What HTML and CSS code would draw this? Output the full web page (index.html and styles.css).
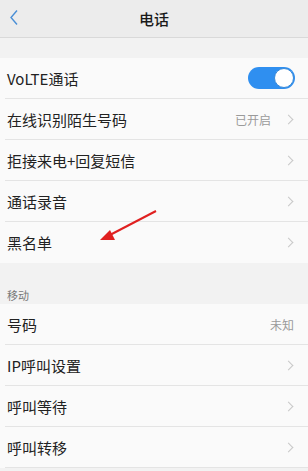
FILE: index.html
```html
<!DOCTYPE html>
<html lang="zh">
<head>
<meta charset="utf-8">
<link rel="stylesheet" href="styles.css">
</head>
<body>
<div class="page">
  <header class="topbar">
    <svg class="back" width="10" height="17" viewBox="0 0 10 17"><path d="M8 1.5 L2 8.5 L8 15.5" fill="none" stroke="#4a8fd6" stroke-width="1.4"/></svg>
    <div class="title">电话</div>
  </header>
  <div class="gap"></div>
  <ul class="list">
    <li class="row"><span class="label">VoLTE通话</span><span class="toggle"><span class="knob"></span></span></li>
    <li class="row"><span class="label">在线识别陌生号码</span><span class="value">已开启</span><span class="chev"></span></li>
    <li class="row"><span class="label">拒接来电+回复短信</span><span class="chev"></span></li>
    <li class="row"><span class="label">通话录音</span><span class="chev"></span></li>
    <li class="row last"><span class="label">黑名单</span><span class="chev"></span></li>
  </ul>
  <div class="section">移动</div>
  <ul class="list">
    <li class="row"><span class="label">号码</span><span class="value nochev">未知</span></li>
    <li class="row"><span class="label">IP呼叫设置</span><span class="chev"></span></li>
    <li class="row"><span class="label">呼叫等待</span><span class="chev"></span></li>
    <li class="row"><span class="label">呼叫转移</span><span class="chev"></span></li>
  </ul>
  <svg class="arrow" width="308" height="471" viewBox="0 0 308 471">
    <line x1="156" y1="211" x2="108" y2="236" stroke="#e02020" stroke-width="2"/>
    <polygon points="100,240 110,230 115,240" fill="#e02020"/>
  </svg>
</div>
</body>
</html>
```
FILE: styles.css
```css
* { box-sizing: border-box; }
html, body { margin: 0; padding: 0; }
body {
  font-family: "Noto Sans CJK SC", "Noto Sans", sans-serif;
  background: #f2f2f2;
  color: #222;
}
.page {
  position: relative;
  width: 308px;
  height: 471px;
  overflow: hidden;
}
.topbar {
  position: relative;
  height: 38px;
  background: #ececec;
  border-bottom: 1px solid #d9d9d9;
  display: flex;
  align-items: center;
  justify-content: center;
}
.back {
  position: absolute;
  left: 9px;
  top: 9px;
}
.title {
  font-size: 15px;
  font-weight: 500;
  color: #1a1a1a;
}
.gap {
  height: 20px;
  background: #f2f2f2;
}
.list {
  list-style: none;
  margin: 0;
  padding: 0;
  background: #fafafa;
}
.row {
  height: 41px;
  display: flex;
  align-items: center;
  padding: 0 14px 0 2px;
  border-bottom: 1px solid #e4e4e4;
  margin-left: 5px;
}
.row.last { border-bottom: none; }
.label {
  flex: 1;
  font-size: 15px;
  color: #222;
}
.value {
  font-size: 12px;
  color: #9a9a9a;
  margin-right: 14px;
}
.value.nochev { margin-right: 0; }
.chev {
  width: 7px;
  height: 7px;
  border-top: 1.3px solid #c8c8c8;
  border-right: 1.3px solid #c8c8c8;
  transform: rotate(45deg);
  margin-right: 2px;
}
.toggle {
  width: 47px;
  height: 22px;
  border-radius: 11px;
  background: #2f8ff0;
  position: relative;
  margin-right: -1px;
}
.knob {
  position: absolute;
  right: 1px;
  top: 1px;
  width: 20px;
  height: 20px;
  border-radius: 50%;
  background: #fff;
  border: 1px solid #3a8ad8;
}
.section {
  height: 41px;
  padding: 24px 0 0 7px;
  font-size: 11px;
  color: #777;
  background: #f2f2f2;
}
.arrow {
  position: absolute;
  left: 0;
  top: 0;
  pointer-events: none;
}
```
